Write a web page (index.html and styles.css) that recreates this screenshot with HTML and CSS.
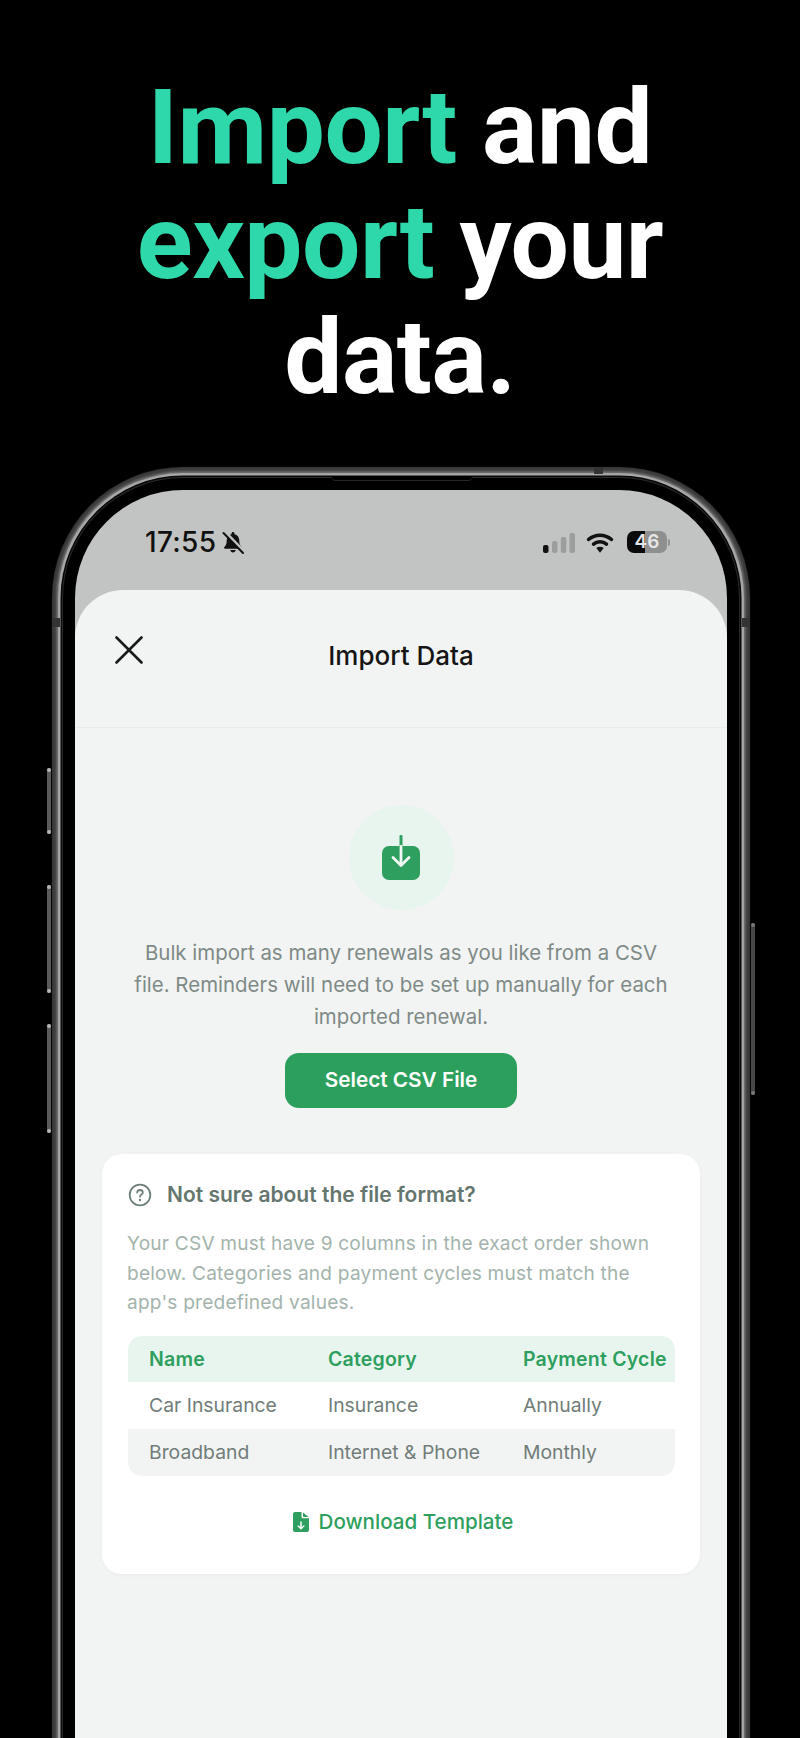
FILE: index.html
```html
<!DOCTYPE html>
<html lang="en">
<head>
<meta charset="utf-8">
<title>Import Data</title>
<link rel="stylesheet" href="styles.css">
</head>
<body>
<div class="page">
  <h1 class="hero"><span class="accent">Import</span> and<br><span class="accent">export</span> your<br>data.</h1>
  <div class="device">
    <span class="btn b-mute"></span>
    <span class="btn b-up"></span>
    <span class="btn b-down"></span>
    <span class="btn b-power"></span>
    <span class="band band-l"></span>
    <span class="band band-r"></span>
    <span class="band band-t"></span>
    <span class="lip"></span>
    <div class="screen">
      <div class="status">
        <div class="status-left">
          <span class="time">17:55</span>
          <svg class="bell" viewBox="0 0 24 24" width="24" height="25" aria-hidden="true">
            <path fill="#111" d="M12 1.500c-.8 0-1.500.7-1.500 1.500v.7C7.400 4.400 5.700 7 5.700 10c0 3.800-.8 5-2.300 6.400-.6.6-.3 1.800.8 1.800h15.600c1.100 0 1.400-1.200.8-1.800C19.100 15 18.300 13.800 18.300 10c0-3-1.700-5.600-4.800-6.300V3c0-.8-.7-1.500-1.500-1.500z"/>
            <path fill="#111" d="M9.300 19.500h5.400c-.2 1.500-1.300 2.500-2.700 2.500s-2.500-1-2.700-2.500z"/>
            <path stroke="#c2c4c3" stroke-width="3.200" stroke-linecap="round" d="M3.800 1.300l19 19.500"/>
            <path stroke="#111" stroke-width="2" stroke-linecap="round" d="M2.500 2.500l19.500 20"/>
          </svg>
        </div>
        <div class="status-right">
          <svg class="signal" viewBox="0 0 32 20" width="32" height="20" aria-hidden="true">
            <rect x="0" y="12" width="5.500" height="8" rx="2" fill="#111"/>
            <rect x="9" y="8" width="5.500" height="12" rx="2" fill="#9c9e9d"/>
            <rect x="17.800" y="4" width="5.500" height="16" rx="2" fill="#9c9e9d"/>
            <rect x="26.500" y="0" width="5.500" height="20" rx="2" fill="#9c9e9d"/>
          </svg>
          <svg class="wifi" viewBox="0 0 28 20" width="28" height="20" aria-hidden="true">
            <g fill="none" stroke="#111" stroke-width="3.500" stroke-linecap="round">
              <path d="M2.500 6.500c6.800-5.600 16.200-5.600 23 0"/>
              <path d="M7.500 11.200c3.800-3.200 9.200-3.200 13 0"/>
            </g>
            <path fill="#111" d="M10.300 15c2.200-1.800 5.200-1.800 7.400 0L14 19.800z"/>
          </svg>
          <div class="battery">
            <div class="battery-body">
              <span class="battery-level">46</span>
            </div>
            <span class="battery-cap"></span>
          </div>
        </div>
      </div>
      <div class="sheet">
        <header class="sheet-head">
          <svg class="close" viewBox="0 0 28 28" width="28" height="28" aria-hidden="true">
            <path d="M1.500 1.500l25 25M26.500 1.500l-25 25" fill="none" stroke="#1a1a1a" stroke-width="2.600" stroke-linecap="round"/>
          </svg>
          <h2 class="sheet-title">Import Data</h2>
        </header>
        <div class="sheet-body">
          <div class="intro">
            <div class="intro-icon">
              <svg viewBox="0 0 40 46" width="40" height="46" aria-hidden="true">
                <rect x="1" y="11" width="38" height="34" rx="7" fill="#2e9f5e"/>
                <rect x="18.500" y="0" width="3" height="12" rx="1.200" fill="#2e9f5e"/>
                <path d="M20 11.500v18.500" stroke="#f1f7f3" stroke-width="2.800" stroke-linecap="round"/>
                <path d="M12 22.500l8 8 8-8" fill="none" stroke="#f1f7f3" stroke-width="2.800" stroke-linecap="round" stroke-linejoin="round"/>
              </svg>
            </div>
            <p class="intro-text">Bulk import as many renewals as you like from a CSV<br>file. Reminders will need to be set up manually for each<br>imported renewal.</p>
            <button class="primary">Select CSV File</button>
          </div>
          <section class="card">
            <div class="card-head">
              <svg viewBox="0 0 24 24" width="24" height="24" aria-hidden="true">
                <circle cx="12" cy="12" r="10.300" fill="none" stroke="#6f8078" stroke-width="1.800"/>
                <path d="M9.200 9.500c.2-1.500 1.300-2.500 2.800-2.500 1.600 0 2.800 1 2.800 2.400 0 2.100-2.800 2.200-2.800 4.300" fill="none" stroke="#6f8078" stroke-width="1.800" stroke-linecap="round"/>
                <circle cx="12" cy="17" r="1.200" fill="#6f8078"/>
              </svg>
              <h3>Not sure about the file format?</h3>
            </div>
            <p class="card-text">Your CSV must have 9 columns in the exact order shown<br>below. Categories and payment cycles must match the<br>app's predefined values.</p>
            <div class="table">
              <div class="row row-head"><span>Name</span><span>Category</span><span>Payment Cycle</span></div>
              <div class="row"><span>Car Insurance</span><span>Insurance</span><span>Annually</span></div>
              <div class="row row-alt"><span>Broadband</span><span>Internet &amp; Phone</span><span>Monthly</span></div>
            </div>
            <div class="download">
              <svg viewBox="0 0 16 20" width="16" height="20" aria-hidden="true">
                <path fill="#2e9f5e" d="M2 0h6.500v4.500c0 1 .8 1.800 1.800 1.800H16V18c0 1.100-.9 2-2 2H2c-1.100 0-2-.9-2-2V2C0 .9.900 0 2 0z"/>
                <path fill="#2e9f5e" d="M10 .4L15.600 5H10.800c-.4 0-.8-.4-.8-.8z"/>
                <path d="M8 10v6.500M5.200 14l2.800 2.800L10.800 14" fill="none" stroke="#fff" stroke-width="1.500" stroke-linecap="round" stroke-linejoin="round"/>
              </svg>
              <span>Download Template</span>
            </div>
          </section>
        </div>
      </div>
    </div>
  </div>
</div>
</body>
</html>
```

FILE: styles.css
```css
* { box-sizing: border-box; }
html, body { margin: 0; padding: 0; background: #000; }
body { width: 800px; height: 1738px; overflow: hidden; font-family: "Inter", "Liberation Sans", sans-serif; }
.page { height: 1738px; display: flex; flex-direction: column; }

.hero {
  margin: 0;
  height: 490px;
  padding-top: 70px;
  text-align: center;
  font-family: "Roboto", "Liberation Sans", sans-serif;
  font-weight: 700;
  font-size: 103.500px;
  line-height: 115px;
  color: #fff;
  letter-spacing: -0.5px;
}
.accent { color: #2fd8ab; }

.device { position: relative; flex: 1; padding-left: 75px; }
.screen {
  width: 652px;
  height: 100%;
  background: #c2c4c3;
  border-radius: 108px 108px 0 0;
  display: flex;
  flex-direction: column;
  box-shadow:
    0 0 0 12px #000,
    0 0 1px 13px #2e2e2e,
    0 0 0 14.500px #060606,
    0 0 1px 16.500px #a8a8a8,
    0 0 2px 18.500px #666,
    0 0 1px 23px #3c3c3c;
}
.btn { position: absolute; width: 4px; background: #5a5a5a; border-radius: 2px; }
.btn::before, .btn::after { content: ""; position: absolute; left: 0; width: 4px; height: 4px; border-radius: 50%; background: #b5b5b5; }
.btn::before { top: 0; }
.btn::after { bottom: 0; }
.b-mute { left: 47px; top: 278px; height: 66px; }
.b-up { left: 47px; top: 395px; height: 108px; }
.b-down { left: 47px; top: 534px; height: 109px; }
.b-power { left: 751px; top: 433px; height: 172px; background: #484848; }
.b-power::before, .b-power::after { background: #777; }
.band { position: absolute; background: #333; }
.band-l { left: 52px; top: 128px; width: 8px; height: 9px; }
.band-r { left: 742px; top: 128px; width: 8px; height: 9px; }
.band-t { left: 594px; top: -23px; width: 9px; height: 7px; }
.lip { position: absolute; left: 332px; top: -14px; width: 140px; height: 5px; background: #000; border-bottom: 1px solid #262626; border-radius: 0 0 4px 4px; z-index: 1; }

.status { height: 100px; flex: none; display: flex; justify-content: space-between; padding: 36px 57px 0 70px; }
.status-left { display: flex; align-items: flex-start; gap: 5px; }
.time { font-size: 28px; line-height: 33px; font-weight: 500; color: #111; letter-spacing: .3px; }
.bell { margin-top: 4px; }
.status-right { display: flex; align-items: flex-start; gap: 11px; padding-top: 7px; }
.wifi { margin-right: 2px; }
.battery { display: flex; align-items: center; gap: 1px; margin-top: -2px; }
.battery-body {
  width: 40px; height: 22px; border-radius: 7px;
  background: linear-gradient(90deg, #0b0b0b 46%, #8e908f 46%);
  display: flex; align-items: center; justify-content: center;
}
.battery-level { font-size: 19px; font-weight: 600; color: #e6e6e6; line-height: 22px; }
.battery-cap { width: 2px; height: 7px; background: #8e908f; border-radius: 0 2px 2px 0; }

.sheet { flex: 1; background: #f2f4f3; border-radius: 48px 48px 0 0; display: flex; flex-direction: column; }
.sheet-head {
  position: relative;
  flex: none;
  height: 138px;
  padding-top: 47px;
  display: flex;
  justify-content: center;
  border-bottom: 1px solid #e8ecea;
}
.close { position: absolute; left: 40px; top: 46px; }
.sheet-title { margin: 0; font-size: 26px; line-height: 38px; font-weight: 500; color: #151515; }

.sheet-body { padding: 77px 27px 0; display: flex; flex-direction: column; }
.intro { display: flex; flex-direction: column; align-items: center; }
.intro-icon {
  width: 105px; height: 105px; border-radius: 50%;
  background: #e8f5ef;
  display: flex; align-items: center; justify-content: center;
}
.intro-text { margin: 27px 0 0; text-align: center; font-size: 20.450px; line-height: 32px; color: #7e8a86; white-space: nowrap; }
.primary {
  margin-top: 20px;
  width: 232px; height: 55px;
  border: 0; border-radius: 14px;
  background: #2c9f5d; color: #fff;
  font: 600 20.750px/1 "Inter", "Liberation Sans", sans-serif;
}

.card { margin-top: 46px; background: #fff; border-radius: 20px; padding: 29px 25px 40px 26px; box-shadow: 0 1px 4px rgba(0,0,0,.03); }
.card-head { display: flex; align-items: center; gap: 15px; height: 24px; }
.card-head h3 { margin: 0; font-size: 21px; line-height: 24px; font-weight: 600; color: #65766e; }
.card-text { margin: 22px 0 0 -1px; font-size: 19.100px; line-height: 29.500px; color: #a3b3ac; letter-spacing: .2px; white-space: nowrap; }
.table { margin-top: 18px; border-radius: 14px; overflow: hidden; }
.row {
  display: grid;
  grid-template-columns: 179px 195px 1fr;
  padding-left: 21px;
  height: 47px;
  align-items: center;
  font-size: 19.350px;
  color: #717d79;
  white-space: nowrap;
}
.row-head { background: #e8f5ef; color: #2e9f5e; font-weight: 600; height: 46px; font-size: 19.500px; letter-spacing: .2px; }
.row-alt { background: #f2f4f3; }
.download { margin-top: 34px; padding-left: 3px; display: flex; justify-content: center; align-items: center; gap: 10px; height: 24px; font-size: 20.600px; font-weight: 500; color: #2e9f5e; }
```
